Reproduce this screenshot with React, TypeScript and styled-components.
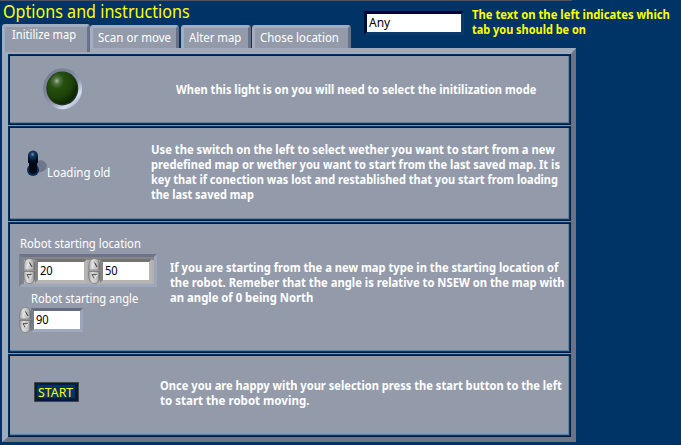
import React, { useLayoutEffect, useRef } from 'react';
import styled, { createGlobalStyle } from 'styled-components';

const Global = createGlobalStyle`
  *{box-sizing:border-box}
  body{margin:0;background:#003366;font-family:"Noto Sans","Open Sans",sans-serif;overflow:hidden}
`;

const Page = styled.div`
  width:681px;height:445px;background:#003366;display:flex;flex-direction:column;
  padding-left:2px;
`;
const TopRule = styled.div`width:572px;height:1px;margin-left:-2px;background:#4c5560;flex:none;`;
const Header = styled.div`height:47px;display:flex;flex:none;`;
const HeaderLeft = styled.div`width:362px;flex:none;display:flex;flex-direction:column;`;
const Title = styled.h1`margin:0;height:23px;flex:none;padding-left:1px;font-weight:400;font-size:17.5px;line-height:20px;color:#ff0;`;
const TabStrip = styled.div`display:flex;align-items:flex-start;height:28px;flex:none;position:relative;z-index:1;`;
const Tab = styled.button<{ $w: number; $active?: boolean; $gap?: number }>`
  flex:none;width:${p => p.$w}px;height:${p => (p.$active ? 28 : 23)}px;
  margin:${p => (p.$active ? 0 : 1)}px ${p => p.$gap ?? 0}px 0 0;
  padding:${p => (p.$active ? '0 0 10px 7px' : '0 0 2px 5px')};
  border:solid;border-width:3px 3px 0 3px;
  border-color:#a3adc0 #697286 transparent #a3adc0;
  border-radius:3px 3px 0 0;background:#939bab;color:#fff;
  font:400 12px "Noto Sans",sans-serif;text-align:left;display:flex;align-items:center;
`;
const ModeField = styled.div`
  width:100px;height:24px;flex:none;margin-top:10px;border:3px solid;
  border-color:#000033 #073b6e #0a3b6c #000b3a;background:#fff;
  color:#000;font-size:12px;line-height:18px;padding-left:2px;
`;
const Hint = styled.div`width:206px;flex:none;margin:6px 0 0 8px;color:#ff0;font-weight:700;font-size:12px;line-height:15px;`;

const Panel = styled.main`
  width:574px;height:394px;flex:none;border:solid;border-width:6px 5px 5px 6px;
  border-color:#a1aabd #697286 #6d7588 #a1aabd;
  display:flex;flex-direction:column;background:#8295ad;gap:1px;
`;
const Section = styled.section<{ $h: number }>`
  height:${p => p.$h}px;flex:none;border:1px solid;border-color:#003366 #001a3b #001a3b #003366;
  display:flex;background:#939bab;
  box-shadow:inset 1px 1px 0 #001a3b,inset -1px -1px 0 #003e70,inset -2px -2px 0 #5c83a5;
`;
const Controls = styled.div<{ $w: number; $top: number; $left: number }>`
  width:${p => p.$w}px;flex:none;padding:${p => p.$top}px 0 0 ${p => p.$left}px;
`;
const Copy = styled.div<{ $top: number }>`
  padding-top:${p => p.$top}px;color:#fff;font-weight:700;font-size:12px;line-height:15px;
`;
const Line = styled.span`display:block;width:max-content;white-space:pre;transform-origin:0 50%;`;
const Label = styled.div`color:#fff;font-size:12px;line-height:16px;`;
const AngleLabel = styled(Label)`margin:4px 0 0 11px;`;
const SwitchRow = styled.div`display:flex;align-items:flex-start;`;
const SwitchLabel = styled(Label)`margin:15px 0 0 -1px;`;
const Cluster = styled.div`
  display:flex;width:138px;height:33px;margin:2px 0 0 -1px;padding:1px 0 0 1px;border:3px solid;
  border-color:#6c7488 #9da7bb #9da7bb #788094;background:#b0b0b0;
  box-shadow:inset 0 3px 0 #858585,inset 2px 0 0 #858585;
`;
const Numeric = styled.div<{ $blue?: boolean }>`
  display:flex;width:65px;height:26px;margin:${p => (p.$blue ? '0 0 0 -1px' : '0')};
`;
const NumberBox = styled.div<{ $blue?: boolean }>`
  width:52px;height:24px;border:3px solid;margin:1px 0 0 -1px;
  border-color:${p => (p.$blue ? '#646d80 #9aa5b9 #a0aabd #747d90' : '#737373 #b6b5b4 #b6b5b4 #858585')};
  background:#fff;color:#000;font-size:12px;line-height:18px;padding-left:2px;
`;
const StartButton = styled.button`
  width:45px;height:20px;display:flex;align-items:center;padding:0 0 0 3px;border:1px solid #444;
  background:#003366;color:#ff0;font:400 12px "Noto Sans",sans-serif;
  box-shadow:inset 2px 2px 0 #001f44,inset -3px -3px 0 #001c3d;
`;

/* Squeezes one line of text to an exact width. */
function Fit({ w, children }: { w: number; children: string }) {
  const ref = useRef<HTMLSpanElement>(null);
  useLayoutEffect(() => {
    const el = ref.current;
    if (el) el.style.transform = `scaleX(${w / el.offsetWidth})`;
  }, [w, children]);
  return <Line ref={ref}>{children}</Line>;
}

function Lamp() {
  return (
    <svg width="42" height="44" viewBox="0 0 42 44" display="block">
      <defs>
        <linearGradient id="ring" x1="0.15" y1="0.1" x2="0.85" y2="0.9">
          <stop offset="0" stopColor="#767f92" /><stop offset=".35" stopColor="#7f889a" /><stop offset=".6" stopColor="#929bad" /><stop offset=".85" stopColor="#d5dff5" /><stop offset="1" stopColor="#a9b3c8" />
        </linearGradient>
        <radialGradient id="glass" cx=".32" cy=".28" r=".75">
          <stop offset="0" stopColor="#a9bda0" /><stop offset=".13" stopColor="#537345" /><stop offset=".32" stopColor="#26500f" /><stop offset=".7" stopColor="#1c4207" /><stop offset="1" stopColor="#0c2300" />
        </radialGradient>
      </defs>
      <ellipse cx="19.500" cy="21.7" rx="19.5" ry="20.5" fill="url(#ring)" />
      <ellipse cx="19.300" cy="21.4" rx="16" ry="17" fill="#24351f" />
      <ellipse cx="19.200" cy="21" rx="15" ry="16" fill="url(#glass)" />
    </svg>
  );
}

function Toggle() {
  return (
    <svg width="22" height="28" viewBox="0 0 22 28" display="block">
      <defs>
        <radialGradient id="knob" cx=".45" cy=".35" r=".65"><stop offset="0" stopColor="#7198bd" /><stop offset=".3" stopColor="#153e69" /><stop offset="1" stopColor="#000c20" /></radialGradient>
      </defs>
      <path d="M10 12c5-4 10-1 11 4c-1 5-6 7-10 6z" fill="#6d7789" />
      <ellipse cx="7" cy="20" rx="6" ry="6" fill="#062e5c" />
      <path d="M3 6h8v16q-4 4-8 0z" fill="#000813" />
      <path d="M2 6v7h10V6z" fill="#000b1d" />
      <ellipse cx="7" cy="6" rx="5" ry="5.500" fill="url(#knob)" />
    </svg>
  );
}

function Spinner() {
  return (
    <svg width="13" height="26" viewBox="0 0 13 26" display="block">
      <defs>
        <linearGradient id="metal" x1="0" x2="1"><stop offset="0" stopColor="#a4a4a4" /><stop offset=".3" stopColor="#dedede" /><stop offset=".75" stopColor="#b8b8b8" /><stop offset="1" stopColor="#555" /></linearGradient>
      </defs>
      <path d="M.7 12V9C.7 4 3 .5 6.500.500S12.300 4 12.300 9v3z" fill="url(#metal)" stroke="#777" strokeWidth=".7" />
      <path d="M.7 13.500V17c0 5 2.300 8.500 5.800 8.500s5.800-3.500 5.800-8.500v-3.500z" fill="url(#metal)" stroke="#6b6b6b" strokeWidth=".7" />
      <path d="M4 9 6.500 4.500" stroke="#eee" fill="none" /><path d="M6.500 4.500 9 9" stroke="#333" fill="none" />
      <path d="M9 16.500H4L6.500 21" stroke="#555" fill="none" /><path d="M6.500 21 9 16.500" stroke="#eee" fill="none" />
    </svg>
  );
}

function NumberControl({ value, blue }: { value: string; blue?: boolean }) {
  return <Numeric $blue={blue}><Spinner /><NumberBox $blue={blue}><Fit w={13}>{value}</Fit></NumberBox></Numeric>;
}

export default function App() {
  return (
    <>
      <Global />
      <Page>
        <TopRule />
        <Header>
          <HeaderLeft>
            <Title><Fit w={187}>Options and instructions</Fit></Title>
            <TabStrip>
              <Tab $w={88} $active><Fit w={64}>Initilize map</Fit></Tab>
              <Tab $w={89} $gap={2}><Fit w={73}>Scan or move</Fit></Tab>
              <Tab $w={70} $gap={1}><Fit w={52}>Alter map</Fit></Tab>
              <Tab $w={99}><Fit w={79}>Chose location</Fit></Tab>
            </TabStrip>
          </HeaderLeft>
          <ModeField><Fit w={21}>Any</Fit></ModeField>
          <Hint><Fit w={198}>The text on the left indicates which</Fit><Fit w={114}>tab you should be on</Fit></Hint>
        </Header>
        <Panel>
          <Section $h={71}>
            <Controls $w={167} $top={12} $left={34}><Lamp /></Controls>
            <Copy $top={27}><Fit w={360}>When this light is on you will need to select the initilization mode</Fit></Copy>
          </Section>
          <Section $h={95}>
            <Controls $w={142} $top={23} $left={17}>
              <SwitchRow><Toggle /><SwitchLabel><Fit w={63}>Loading old</Fit></SwitchLabel></SwitchRow>
            </Controls>
            <Copy $top={15}>
              <Fit w={404}>Use the switch on the left to select wether you want to start from a new</Fit>
              <Fit w={409}>predefined map or wether you want to start from the last saved map. It is</Fit>
              <Fit w={407}>key that if conection was lost and restablished that you start from loading</Fit>
              <Fit w={103}>the last saved map</Fit>
            </Copy>
          </Section>
          <Section $h={131}>
            <Controls $w={161} $top={13} $left={11}>
              <Label><Fit w={121}>Robot starting location</Fit></Label>
              <Cluster><NumberControl value="20" /><NumberControl value="50" /></Cluster>
              <AngleLabel><Fit w={107}>Robot starting angle</Fit></AngleLabel>
              <NumberControl value="90" blue />
            </Controls>
            <Copy $top={37}>
              <Fit w={388}>If you are starting from the a new map type in the starting location of</Fit>
              <Fit w={395}>the robot. Remeber that the angle is relative to NSEW on the map with</Fit>
              <Fit w={143}>an angle of 0 being North</Fit>
            </Copy>
          </Section>
          <Section $h={83}>
            <Controls $w={151} $top={27} $left={25}><StartButton><Fit w={35}>START</Fit></StartButton></Controls>
            <Copy $top={23}>
              <Fit w={402}>Once you are happy with your selection press the start button to the left</Fit>
              <Fit w={149}>to start the robot moving.</Fit>
            </Copy>
          </Section>
        </Panel>
      </Page>
    </>
  );
}
